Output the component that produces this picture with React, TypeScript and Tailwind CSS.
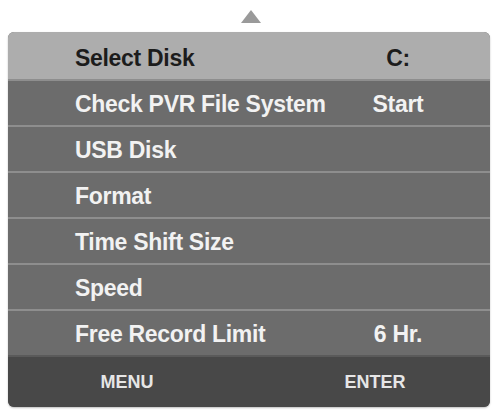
import React from "react";

const rows: { label: string; value?: string }[] = [
  { label: "Check PVR File System", value: "Start" },
  { label: "USB Disk" },
  { label: "Format" },
  { label: "Time Shift Size" },
  { label: "Speed" },
  { label: "Free Record Limit", value: "6 Hr." },
];

export default function App() {
  return (
    <div
      className="w-[493px] h-[412px] bg-white overflow-hidden flex flex-col"
      style={{ fontFamily: '"Liberation Sans", Arial, sans-serif' }}
    >
      <div className="h-[32px] flex justify-center pt-[10px] pl-[8px]">
        <svg width="20" height="13" viewBox="0 0 20 13">
          <polygon points="10,0 20,13 0,13" fill="#9a9a9a" />
        </svg>
      </div>
      <div className="ml-[8px] w-[482px] h-[375px] rounded-[6px] overflow-hidden flex flex-col bg-[#6c6c6c] shadow-[0_1px_2px_rgba(0,0,0,0.25)]">
        <div className="h-[47px] bg-[#adadad] flex items-center pl-[67px] pt-[5px] text-[23px] font-bold text-[#1c1c1c] tracking-[-0.3px]">
          <div className="w-[283px]">Select Disk</div>
          <div className="w-[80px] text-center">C:</div>
        </div>
        {rows.map((r) => (
          <div
            key={r.label}
            className="h-[46px] border-t-2 border-[#8e8e8e] bg-[#6c6c6c] flex items-center pl-[67px] pt-[2px] text-[23px] font-bold text-[#f2f2f2] tracking-[-0.3px]"
          >
            <div className="w-[283px]">{r.label}</div>
            <div className="w-[80px] text-center">{r.value ?? ""}</div>
          </div>
        ))}
        <div className="flex-1 bg-[#484848] border-t-2 border-[#5a5a5a] flex items-center text-[18px] font-bold text-[#e6e6e6]">
          <div className="ml-[59px] w-[120px] text-center">MENU</div>
          <div className="ml-[128px] w-[120px] text-center">ENTER</div>
        </div>
      </div>
    </div>
  );
}
